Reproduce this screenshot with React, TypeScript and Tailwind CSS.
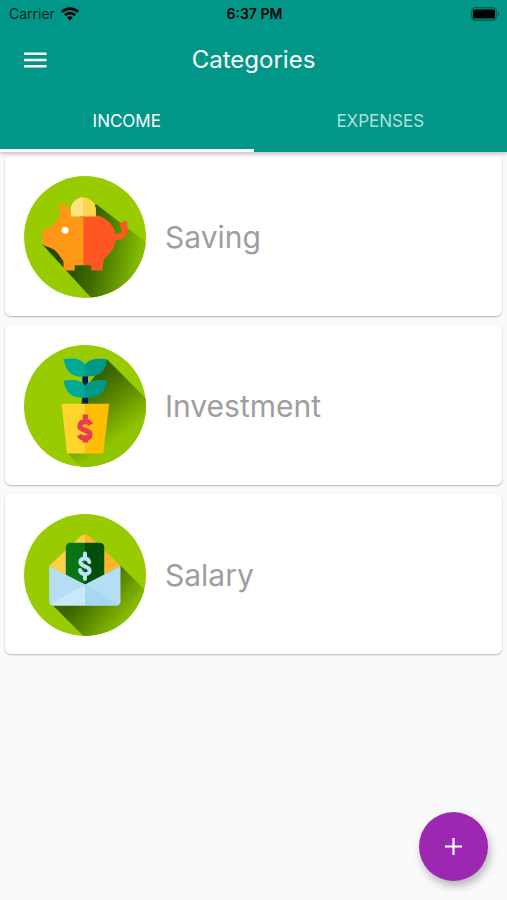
import { useState } from "react";
import type { ReactNode } from "react";

function WifiIcon() {
  return (
    <svg viewBox="0 0 18 14" className="h-3.5 w-[18px]" aria-hidden="true">
      <g fill="none" stroke="#000" strokeWidth="2.7">
        <path d="M.9 4.9a11.5 11.5 0 0 1 16.2 0" />
        <path d="M3.9 8.3a7.2 7.2 0 0 1 10.2 0" />
      </g>
      <path d="M9 13.4 6.1 10.8a4.1 4.1 0 0 1 5.8 0Z" />
    </svg>
  );
}

function BatteryIcon() {
  return (
    <svg viewBox="0 0 29 14" className="h-3.5 w-[29px]" aria-hidden="true">
      <rect x=".8" y=".8" width="24.6" height="12.4" rx="3.6" fill="none" stroke="#000" strokeOpacity=".35" strokeWidth="1.4" />
      <rect x="2" y="2.4" width="22" height="9.2" rx="1.6" />
      <path d="M26.9 5a2.2 2.2 0 0 1 0 4Z" fillOpacity=".4" />
    </svg>
  );
}

function SavingIcon() {
  return (
    <svg viewBox="42 30 368 368" className="size-[122px] shrink-0" aria-hidden="true">
      <defs>
        <clipPath id="saving-clip"><circle cx="226" cy="214" r="184" /></clipPath>
        <linearGradient id="saving-shade" gradientUnits="userSpaceOnUse" x1="180" y1="250" x2="390" y2="290">
          <stop offset="0" stopColor="#244a00" />
          <stop offset=".4" stopColor="#3f6e00" />
          <stop offset="1" stopColor="#86bd00" />
        </linearGradient>
      </defs>
      <circle cx="226" cy="214" r="184" fill="#98cb00" />
      <g clipPath="url(#saving-clip)">
        <path d="M97 236 260 115 430 245V430H275L245 398Z" fill="url(#saving-shade)" />
      </g>
      <path d="M220 150h48c24 8 44 29 50 54 9 3 18-1 19-9 1-6-6-9-5-17 2-8 9-13 16-12 8 2 5 8 5 14 3 7 3 20-2 28-7 11-20 17-32 14-4 24-15 43-33 55-4 8-6 17-7 38h-34v-16h-25Z" fill="#ff5724" />
      <path d="M150 112c13 2 24 8 29 16 2 8 4 16 5 24h37v147h-26v16h-34v-28c-8-11-16-25-29-35-12-8-30-10-35-17v-41c20-3 37-17 54-40-3-14-2-27-1-42Z" fill="#ff9817" />
      <path d="M183 152v-19a37 39 0 0 1 37-39v58Z" fill="#ffe183" />
      <path d="M220 94a39 39 0 0 1 39 39v19h-39Z" fill="#ffd34d" />
      <circle cx="166" cy="194" r="10.5" fill="#fff" />
    </svg>
  );
}

function InvestmentIcon() {
  return (
    <svg viewBox="42 27 368 368" className="size-[122px] shrink-0" aria-hidden="true">
      <defs>
        <clipPath id="plant-clip"><circle cx="226" cy="211" r="184" /></clipPath>
        <linearGradient id="plant-shade" gradientUnits="userSpaceOnUse" x1="260" y1="130" x2="370" y2="280">
          <stop offset="0" stopColor="#376300" />
          <stop offset=".5" stopColor="#629100" />
          <stop offset="1" stopColor="#91c400" />
        </linearGradient>
      </defs>
      <circle cx="226" cy="211" r="184" fill="#98cb00" />
      <g clipPath="url(#plant-clip)">
        <path d="M293 71 420 198V410H230L173 353 226 160Z" fill="url(#plant-shade)" />
      </g>
      <path d="M218 119h17v85h-17Z" fill="#071a50" />
      <path d="M161 70c26-5 56-1 65 16v36c-37 3-55-8-65-52Zm0 65c27-5 55-2 65 15v36c-36 2-57-10-65-51Z" fill="#00aa97" />
      <path d="M226 86c12-18 38-20 67-16-7 42-27 54-67 52Zm0 64c13-17 39-20 67-15-8 40-29 53-67 51Z" fill="#009887" />
      <path d="M155 204h73v150h-56Z" fill="#ffd42c" />
      <path d="M228 204h71l-18 150h-53Z" fill="#ffbe04" />
      <g fill="none" stroke="#ed3b50" strokeWidth="16" strokeLinejoin="round">
        <path d="M227 237v22m0 41v21" />
        <path d="M243 267c-5-11-29-13-32 3-3 18 31 10 30 27-1 18-26 13-33 2" />
      </g>
    </svg>
  );
}

function SalaryIcon() {
  return (
    <svg viewBox="42 29 368 368" className="size-[122px] shrink-0" aria-hidden="true">
      <defs>
        <clipPath id="salary-clip"><circle cx="226" cy="213" r="184" /></clipPath>
        <linearGradient id="salary-shade" gradientUnits="userSpaceOnUse" x1="225" y1="265" x2="345" y2="365">
          <stop offset="0" stopColor="#3a6500" />
          <stop offset=".5" stopColor="#629200" />
          <stop offset="1" stopColor="#90c400" />
        </linearGradient>
      </defs>
      <circle cx="226" cy="213" r="184" fill="#98cb00" />
      <g clipPath="url(#salary-clip)">
        <path d="m333 184 87 87v140H235L124 300Z" fill="url(#salary-shade)" />
      </g>
      <path d="M118 186 212 97q7-6 14-6v150Z" fill="#ffce4b" />
      <path d="M226 91q7 0 14 6l94 89-108 55Z" fill="#ffb62d" />
      <path d="M168 217v-86q0-15 15-15h43v126Z" fill="#087311" />
      <path d="M226 116h43q15 0 15 15v86l-58 26Z" fill="#004f08" />
      <g fill="none" stroke="#b9e5fa" strokeWidth="12" strokeLinejoin="round" strokeLinecap="round">
        <path d="M226 148v14m0 50v13" />
        <path d="M239 174c-3-14-27-15-27 0 0 16 28 10 28 26 0 15-27 14-29-2" />
      </g>
      <path d="m118 186 108 56 107-56v107q0 12-13 12H131q-13 0-13-12Z" fill="#b5def5" />
      <path d="m122 301 104-59v63h-95Z" fill="#cae8fc" />
      <path d="m226 242 103 59q-3 4-9 4h-94Z" fill="#a7d8f3" />
    </svg>
  );
}

const categories: { name: string; icon: ReactNode }[] = [
  { name: "Saving", icon: <SavingIcon /> },
  { name: "Investment", icon: <InvestmentIcon /> },
  { name: "Salary", icon: <SalaryIcon /> },
];

export default function App() {
  const [tab, setTab] = useState("INCOME");

  return (
    <div className="relative flex min-h-screen flex-col bg-[#fafafa] font-['Inter',sans-serif]">
      <header className="relative bg-[#009788] shadow-[0_2px_4px_rgba(0,0,0,0.22)]">
        <div className="grid h-7 grid-cols-3 items-center pr-[7px] pl-[9px] text-sm text-black">
          <div className="flex items-center gap-1.5">
            <span className="text-black/80">Carrier</span>
            <WifiIcon />
          </div>
          <span className="text-center font-semibold">6:37 PM</span>
          <div className="flex justify-end">
            <BatteryIcon />
          </div>
        </div>
        <div className="grid h-16 grid-cols-[48px_1fr_48px] items-center px-[11px]">
          <button type="button" aria-label="Open menu" className="flex size-12 items-center justify-center">
            <svg viewBox="0 0 24 16" className="h-4 w-6" fill="#fff" aria-hidden="true">
              <path d="M1 .5h22.5V3H1ZM1 6.7h22.5v2.5H1ZM1 13h22.5v2.5H1Z" />
            </svg>
          </button>
          <h1 className="text-center text-2xl text-white">Categories</h1>
        </div>
        <div role="tablist" className="grid h-15 grid-cols-2">
          {["INCOME", "EXPENSES"].map((name) => (
            <button
              key={name}
              type="button"
              role="tab"
              aria-selected={tab === name}
              onClick={() => setTab(name)}
              className={
                tab === name
                  ? "border-y-3 border-t-transparent border-b-white text-[17px] text-white"
                  : "border-y-3 border-transparent text-[17px] text-white/70"
              }
            >
              {name}
            </button>
          ))}
        </div>
      </header>

      <main className="px-[5px] pt-1">
        <ul className="flex flex-col gap-[9px]">
          {categories.map(({ name, icon }) => (
            <li
              key={name}
              className="flex h-40 items-center gap-[19px] rounded-md bg-white px-[19px] pt-px shadow-[0_1px_2px_rgba(0,0,0,0.28)]"
            >
              {icon}
              <span className="text-3xl text-[#9e9e9e]">{name}</span>
            </li>
          ))}
        </ul>
      </main>

      <button
        type="button"
        aria-label="Add category"
        className="fixed right-[19px] bottom-[19px] flex size-[69px] items-center justify-center rounded-full bg-[#9c27b0] shadow-[2px_5px_9px_rgba(0,0,0,0.28)]"
      >
        <svg viewBox="0 0 17 17" className="size-[17px]" stroke="#fff" strokeWidth="2.2" aria-hidden="true">
          <path d="M8.5 0v17M0 8.5h17" />
        </svg>
      </button>
    </div>
  );
}
